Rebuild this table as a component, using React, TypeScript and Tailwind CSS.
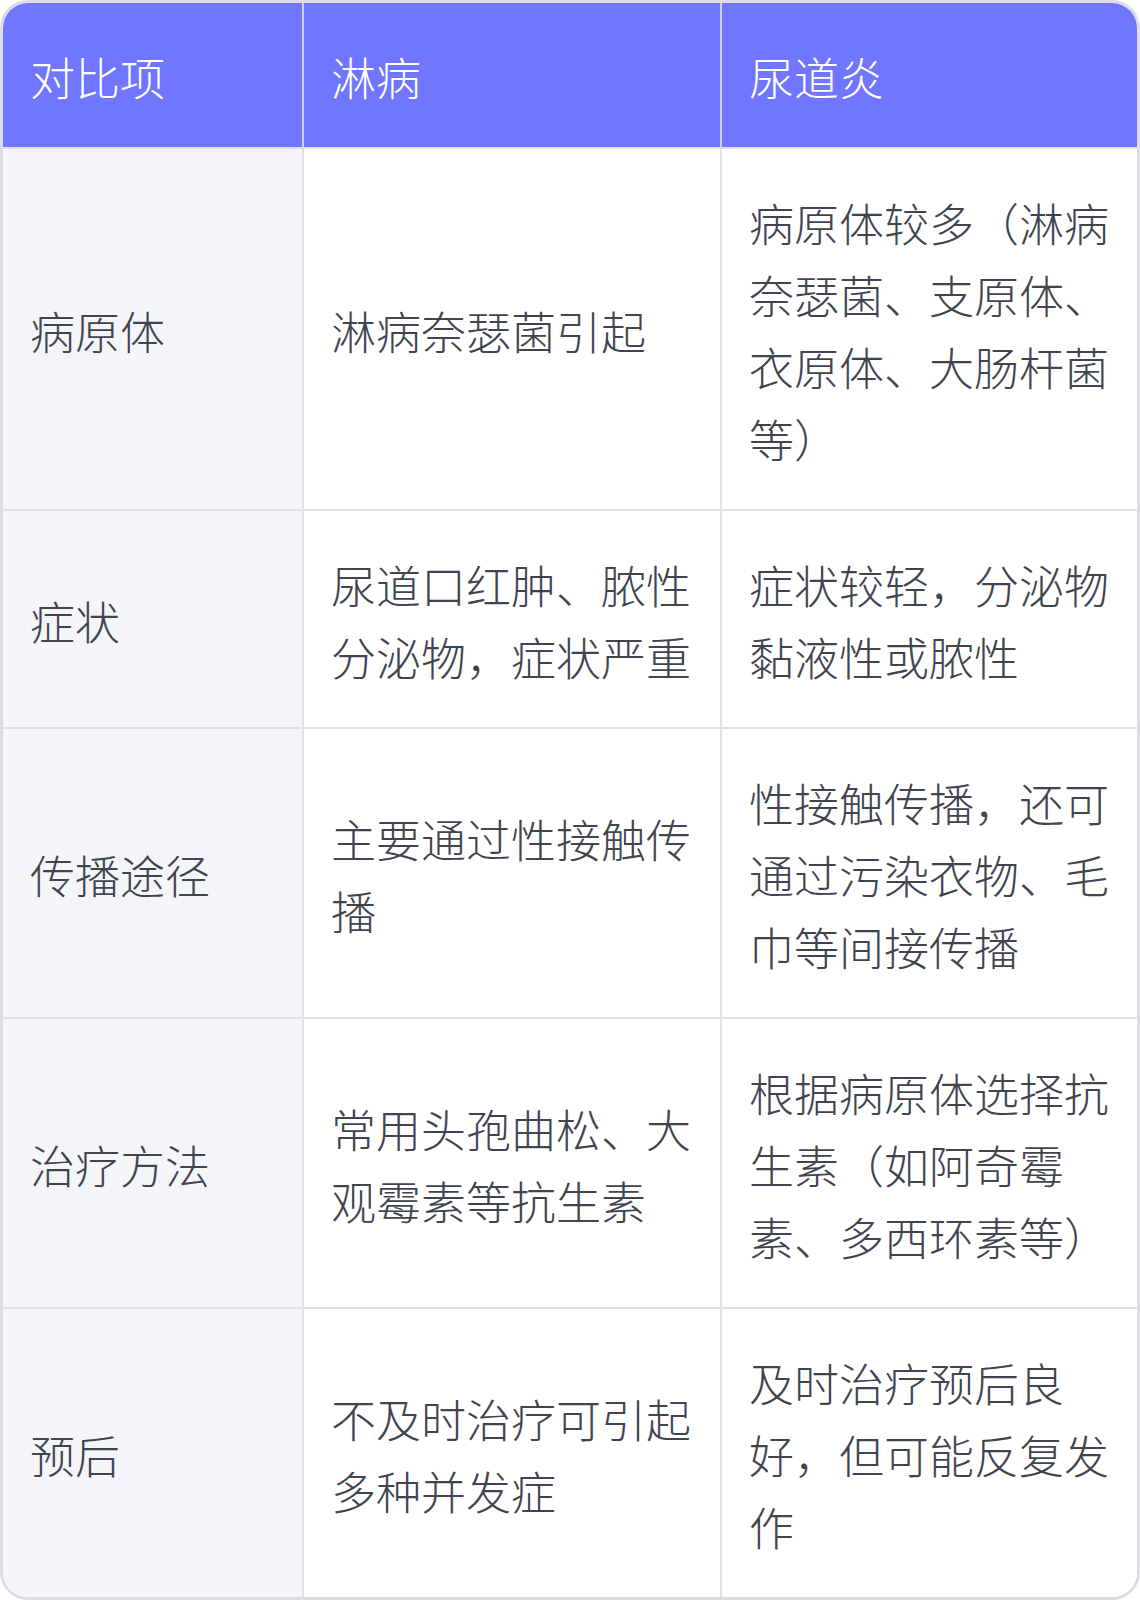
const font = { fontFamily: '"Noto Sans CJK SC", "Noto Sans", sans-serif' }

const rows: [string, string, string][] = [
  ["病原体", "淋病奈瑟菌引起", "病原体较多（淋病奈瑟菌、支原体、衣原体、大肠杆菌等）"],
  ["症状", "尿道口红肿、脓性分泌物，症状严重", "症状较轻，分泌物黏液性或脓性"],
  ["传播途径", "主要通过性接触传播", "性接触传播，还可通过污染衣物、毛巾等间接传播"],
  ["治疗方法", "常用头孢曲松、大观霉素等抗生素", "根据病原体选择抗生素（如阿奇霉素、多西环素等）"],
  ["预后", "不及时治疗可引起多种并发症", "及时治疗预后良好，但可能反复发作"],
]

export default function App() {
  return (
    <div className="w-[1140px] bg-white" style={font}>
      <div className="overflow-hidden rounded-[28px] border-[3px] border-[#dcdde1] text-[45px] font-light leading-[72px] text-[#40444f]">
        <div className="grid grid-cols-[301px_418px_415px] bg-[#7076ff] text-white">
          <div className="border-r-2 border-b-2 border-r-[#cfd1ee] border-b-[#e0e1e6] px-[27px] pt-[38px] pb-[34px]">对比项</div>
          <div className="border-r-2 border-b-2 border-r-[#cfd1ee] border-b-[#e0e1e6] px-[27px] pt-[38px] pb-[34px]">淋病</div>
          <div className="border-b-2 border-b-[#e0e1e6] px-[27px] pt-[38px] pb-[34px]">尿道炎</div>
        </div>
        {rows.map(([a, b, c], i) => {
          const last = i === rows.length - 1
          return (
            <div key={a} className="grid grid-cols-[301px_418px_415px]">
              <div
                className={`flex items-center border-r-2 border-[#e0e1e6] bg-[#f4f5f9] px-[27px] pt-[38px] pb-[34px] ${last ? "" : "border-b-2"}`}
              >
                {a}
              </div>
              <div
                className={`flex items-center border-r-2 border-[#e0e1e6] bg-white px-[27px] pt-[38px] pb-[34px] ${last ? "" : "border-b-2"}`}
              >
                {b}
              </div>
              <div className={`flex items-center border-[#e0e1e6] bg-white px-[27px] pt-[38px] pb-[34px] ${last ? "" : "border-b-2"}`}>
                {c}
              </div>
            </div>
          )
        })}
      </div>
    </div>
  )
}
